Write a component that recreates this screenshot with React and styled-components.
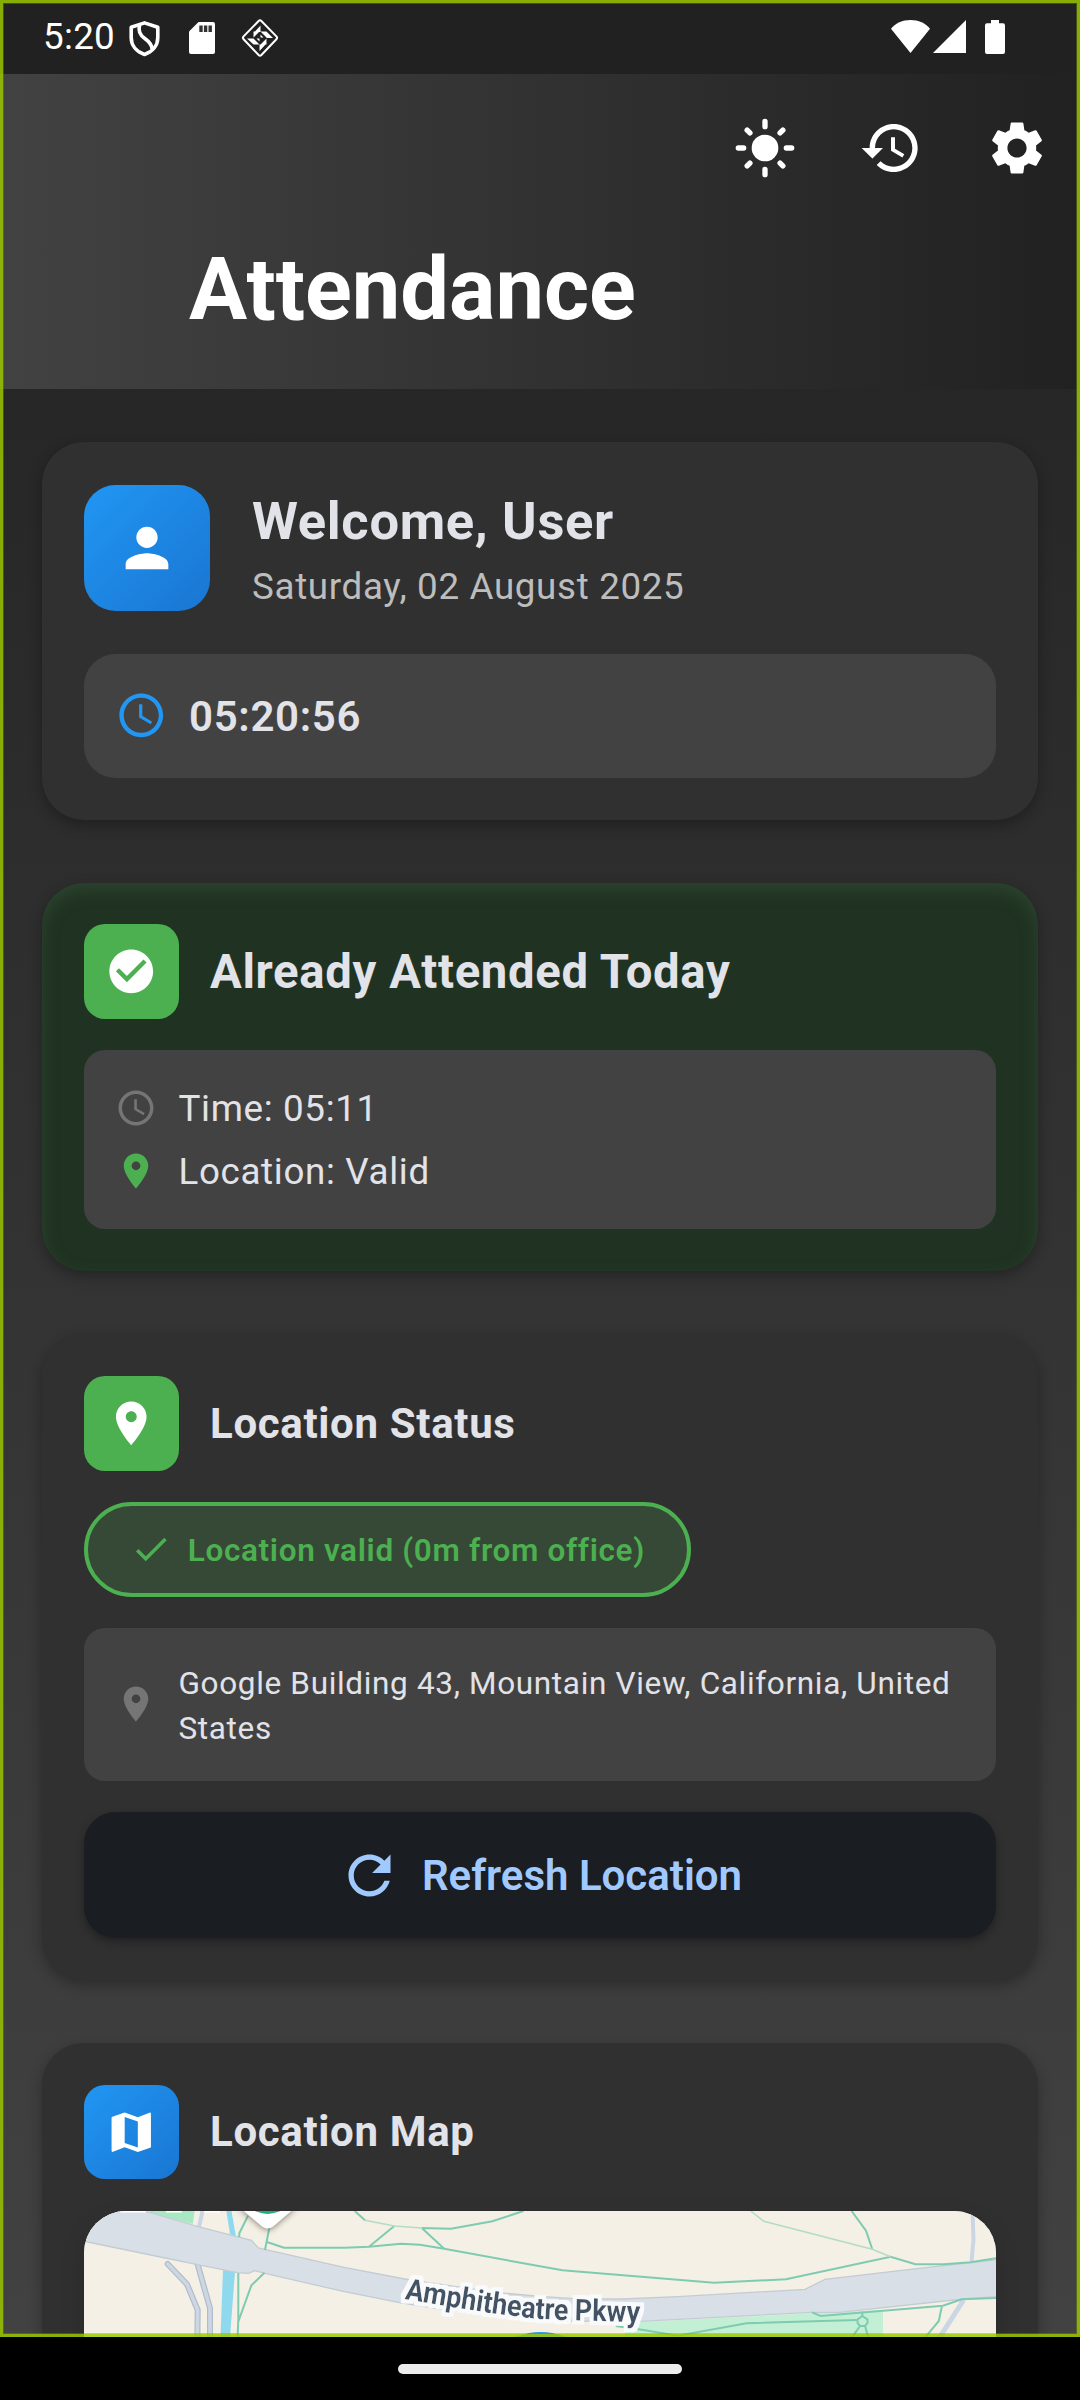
import React from "react";
import styled, { createGlobalStyle, css } from "styled-components";

const GlobalStyle = createGlobalStyle`
  *, *::before, *::after { box-sizing: border-box; }
  html, body { margin: 0; padding: 0; background: #000; }
  body { font-family: Roboto, "Noto Sans", sans-serif; color: #e2e2e9; }
`;

const Phone = styled.div`
  width: 1080px;
  height: 2400px;
  display: flex;
  flex-direction: column;
  overflow: hidden;
  background: #000;
`;

const Screen = styled.div`
  position: relative;
  height: 2337px;
  flex: none;
  display: flex;
  flex-direction: column;
  overflow: hidden;
  background: linear-gradient(180deg, #212121 0%, #424242 100%);
`;

const FocusFrame = styled.div`
  position: absolute;
  inset: 0;
  border: 3px solid rgba(155, 200, 0, 0.84);
  box-shadow: inset 0 0 0 1px rgba(120, 155, 0, 0.4);
  pointer-events: none;
`;

const StatusBar = styled.div`
  height: 74px;
  flex: none;
  display: flex;
  justify-content: space-between;
  padding: 0 75px 0 43px;
  background: #212121;
`;

const StatusGroup = styled.div`
  display: flex;
  align-items: flex-start;
`;

const StatusTime = styled.span`
  font-size: 36.75px;
  line-height: 44px;
  letter-spacing: 0.3px;
  padding-top: 15px;
  width: 83px;
  color: #fff;
`;

const StatusGlyph = styled.svg`
  display: block;
  flex: none;
  margin-left: ${(p) => p.$gap || 0}px;
  margin-top: ${(p) => p.$top}px;
`;

const AppBar = styled.header`
  height: 315px;
  flex: none;
  display: flex;
  flex-direction: column;
  justify-content: space-between;
  background: linear-gradient(90deg, #424242 0%, #212121 100%);
`;

const Actions = styled.div`
  display: flex;
  justify-content: flex-end;
  height: 147px;
`;

const ActionButton = styled.button`
  width: 126px;
  height: 147px;
  display: flex;
  align-items: center;
  justify-content: center;
  border: 0;
  padding: 0;
  background: none;
  color: #fff;
`;

const PageTitle = styled.h1`
  margin: 0;
  padding: 0 0 49px 189px;
  font-size: 86.6px;
  line-height: 100px;
  font-weight: 700;
  color: #fff;
`;

const Content = styled.main`
  display: flex;
  flex-direction: column;
  gap: 63px;
  padding: 53px 42px 0;
`;

const Card = styled.section`
  height: ${(p) => p.$height}px;
  flex: none;
  display: flex;
  flex-direction: column;
  padding: ${(p) => p.$top || 42}px 42px 42px;
  border-radius: 42px;
  background: #303030;
  box-shadow: 0 5px 14px rgba(0, 0, 0, 0.3);
  ${(p) =>
    p.$success &&
    css`
      background: #203322;
      box-shadow: 0 5px 14px rgba(0, 0, 0, 0.3), inset 0 7px 16px rgba(56, 84, 60, 0.5);
    `}
`;

const CardHead = styled.div`
  display: flex;
  align-items: center;
  gap: 31.5px;
  height: 94.5px;
  flex: none;
  margin-bottom: 31.5px;
`;

const Tile = styled.div`
  width: ${(p) => p.$size || 94.5}px;
  height: ${(p) => p.$size || 94.5}px;
  flex: none;
  display: flex;
  align-items: center;
  justify-content: center;
  border-radius: ${(p) => p.$radius || 21}px;
  color: #fff;
  background: ${(p) =>
    p.$tone === "green" ? "#4caf50" : "linear-gradient(135deg, #2196f3 0%, #1976d2 100%)"};
`;

const CardTitle = styled.h2`
  margin: 0;
  padding-top: ${(p) => (p.$large ? 2 : 0)}px;
  font-size: ${(p) => (p.$large ? 47.25 : 42)}px;
  line-height: 63px;
  font-weight: 700;
  letter-spacing: 0.66px;
  color: #e2e2e9;
`;

const Profile = styled.div`
  display: flex;
  align-items: center;
  gap: 42px;
  height: 129px;
  flex: none;
  margin-bottom: 41.5px;
`;

const ProfileText = styled.div`
  display: flex;
  flex-direction: column;
  height: 132px;
  justify-content: space-between;
`;

const Greeting = styled.h2`
  margin: 0;
  font-size: 52.5px;
  line-height: 78px;
  font-weight: 700;
  letter-spacing: 0.66px;
`;

const DateLine = styled.p`
  margin: 0;
  font-size: 36.75px;
  line-height: 52.5px;
  letter-spacing: 0.66px;
  color: #bdbdbd;
`;

const Clock = styled.div`
  height: 124px;
  display: flex;
  align-items: center;
  gap: 21.5px;
  padding: 0 31px;
  border-radius: 31.5px;
  background: #424242;
  color: #e2e2e9;
  font-size: 42px;
  line-height: 60px;
  font-weight: 600;
  letter-spacing: 0.66px;
`;

const DetailBox = styled.div`
  flex: none;
  display: flex;
  flex-direction: column;
  justify-content: center;
  gap: 10.5px;
  height: ${(p) => p.$height}px;
  padding: 0 31px;
  border-radius: 21px;
  background: #424242;
`;

const DetailRow = styled.div`
  display: flex;
  align-items: center;
  gap: 21.5px;
  height: ${(p) => (p.$twoLine ? 90 : 52.5)}px;
`;

const DetailText = styled.span`
  font-size: ${(p) => (p.$small ? 31.5 : 36.75)}px;
  line-height: ${(p) => (p.$small ? 45 : 52.5)}px;
  padding-top: ${(p) => (p.$small ? 4 : 2)}px;
  letter-spacing: 0.66px;
  color: #e2e2e9;
`;

const StatusPill = styled.div`
  align-self: flex-start;
  flex: none;
  display: flex;
  align-items: center;
  gap: 15.75px;
  height: 94.5px;
  padding: 0 42px;
  margin-bottom: 31.5px;
  border: 4px solid #4caf50;
  border-radius: 52.5px;
  background: #364936;
  color: #4caf50;
  font-size: 31.5px;
  line-height: 45px;
  font-weight: 600;
  letter-spacing: 0.66px;
`;

const InlineLabel = styled.span`
  padding-top: ${(p) => p.$drop || 2}px;
`;

const RefreshButton = styled.button`
  height: 126px;
  flex: none;
  margin-top: 31.5px;
  display: flex;
  align-items: center;
  justify-content: center;
  gap: 21px;
  border: 0;
  border-radius: 31.5px;
  background: #1a1d21;
  box-shadow: 0 4px 9px rgba(0, 0, 0, 0.32);
  color: #a0caff;
  font-family: inherit;
  font-size: 42px;
  line-height: 60px;
  font-weight: 600;
`;

const MapFrame = styled.div`
  height: 260px;
  flex: none;
  overflow: hidden;
  border-radius: 42px;
  background: #f4f0e5;
  box-shadow: 0 10px 26px rgba(0, 0, 0, 0.14);
`;

const MapCanvas = styled.svg`
  display: block;
`;

const RoadLabel = styled.text`
  font-family: Roboto, "Noto Sans", sans-serif;
  font-size: 30px;
  font-weight: 700;
  fill: #435266;
`;

const NavBar = styled.div`
  height: 63px;
  display: flex;
  justify-content: center;
  align-items: flex-start;
  padding-top: 27px;
`;

const NavHandle = styled.div`
  width: 284px;
  height: 10px;
  border-radius: 5px;
  background: #ececec;
`;

const Glyph = styled.svg`
  display: block;
  flex: none;
  width: ${(p) => p.$size}px;
  height: ${(p) => p.$size}px;
  fill: ${(p) => p.$color || "currentColor"};
`;

const PATHS = {
  history:
    "M13 3c-4.97 0-9 4.03-9 9H1l3.89 3.89.07.14L9 12H6c0-3.87 3.13-7 7-7s7 3.13 7 7-3.13 7-7 7c-1.93 0-3.68-.79-4.94-2.06l-1.42 1.42C8.27 19.99 10.51 21 13 21c4.97 0 9-4.03 9-9s-4.03-9-9-9zm-1 5v5l4.28 2.54.72-1.21-3.5-2.08V8H12z",
  settings:
    "M19.14 12.94c.04-.3.06-.61.06-.94 0-.32-.02-.64-.07-.94l2.03-1.58c.18-.14.23-.41.12-.61l-1.92-3.32c-.12-.22-.37-.29-.59-.22l-2.39.96c-.5-.38-1.03-.7-1.62-.94l-.36-2.54c-.04-.24-.24-.41-.48-.41h-3.84c-.24 0-.43.17-.47.41l-.36 2.54c-.59.24-1.13.57-1.62.94l-2.39-.96c-.22-.08-.47 0-.59.22L2.74 8.87c-.12.21-.08.47.12.61l2.03 1.58c-.05.3-.09.63-.09.94s.02.64.07.94l-2.03 1.58c-.18.14-.23.41-.12.61l1.92 3.32c.12.22.37.29.59.22l2.39-.96c.5.38 1.03.7 1.62.94l.36 2.54c.05.24.24.41.48.41h3.84c.24 0 .44-.17.47-.41l.36-2.54c.59-.24 1.13-.56 1.62-.94l2.39.96c.22.08.47 0 .59-.22l1.92-3.32c.12-.22.07-.47-.12-.61l-2.01-1.58zM12 15.6c-1.98 0-3.6-1.62-3.6-3.6s1.62-3.6 3.6-3.6 3.6 1.62 3.6 3.6-1.62 3.6-3.6 3.6z",
  person:
    "M12 12c2.21 0 4-1.79 4-4s-1.79-4-4-4-4 1.79-4 4 1.79 4 4 4zm0 2c-2.67 0-8 1.34-8 4v2h16v-2c0-2.66-5.33-4-8-4z",
  clock:
    "M11.99 2C6.47 2 2 6.48 2 12s4.47 10 9.99 10C17.52 22 22 17.52 22 12S17.52 2 11.99 2zM12 20c-4.42 0-8-3.58-8-8s3.58-8 8-8 8 3.58 8 8-3.58 8-8 8zm.5-13H11v6l5.25 3.15.75-1.23-4.5-2.67z",
  checkCircle:
    "M12 2C6.48 2 2 6.48 2 12s4.48 10 10 10 10-4.48 10-10S17.52 2 12 2zm-2 15l-5-5 1.41-1.41L10 14.17l7.59-7.59L19 8l-9 9z",
  pin: "M12 2C8.13 2 5 5.13 5 9c0 5.25 7 13 7 13s7-7.75 7-13c0-3.87-3.13-7-7-7zm0 9.5c-1.38 0-2.5-1.12-2.5-2.5s1.12-2.5 2.5-2.5 2.5 1.12 2.5 2.5-1.12 2.5-2.5 2.5z",
  check: "M9 16.17L4.83 12l-1.42 1.41L9 19 21 7l-1.41-1.41z",
  refresh:
    "M17.65 6.35C16.2 4.9 14.21 4 12 4c-4.42 0-7.99 3.58-7.99 8s3.57 8 7.99 8c3.73 0 6.84-2.55 7.73-6h-2.08c-.82 2.33-3.04 4-5.65 4-3.31 0-6-2.69-6-6s2.69-6 6-6c1.66 0 3.14.69 4.22 1.78L13 11h7V4l-2.35 2.35z",
  map: "M20.5 3l-.16.03L15 5.1 9 3 3.36 4.9c-.21.07-.36.25-.36.48V20.5c0 .28.22.5.5.5l.16-.03L9 18.9l6 2.1 5.64-1.9c.21-.07.36-.25.36-.48V3.5c0-.28-.22-.5-.5-.5zM15 19l-6-2.11V5l6 2.11V19z",
};

function Icon({ name, size, color }) {
  return (
    <Glyph viewBox="0 0 24 24" $size={size} $color={color} aria-hidden="true">
      <path d={PATHS[name]} />
    </Glyph>
  );
}

function SunIcon() {
  return (
    <Glyph viewBox="0 0 24 24" $size={64} aria-hidden="true">
      <circle cx="12" cy="12" r="5" />
      <g stroke="currentColor" strokeWidth="2" strokeLinecap="round">
        <path d="M12 2v2M12 20v2M2 12h2M20 12h2M5.3 5.3l1.05 1.05M17.65 17.65l1.05 1.05M5.3 18.7l1.05-1.05M17.65 6.35l1.05-1.05" />
      </g>
    </Glyph>
  );
}

function StatusIcons() {
  return (
    <>
      <StatusGlyph width="36" height="38" viewBox="0 0 36 38" $top={20}>
        <path
          d="M18.500 2.900 5.200 7.300v10.200c0 8 5.200 14.300 13.300 17 8.100-2.700 13.300-9 13.300-17V7.300z"
          fill="none"
          stroke="#fff"
          strokeWidth="3.600"
          strokeLinejoin="round"
        />
        <path
          d="M13.500 5.500c-1.500 6 .5 9.500 5 12.700s7.500 6 7.500 10.800"
          fill="none"
          stroke="#fff"
          strokeWidth="3.600"
        />
      </StatusGlyph>
      <StatusGlyph width="26" height="32" viewBox="0 0 26 32" $gap={27} $top={22}>
        <path
          d="M9.500 0H24a2 2 0 0 1 2 2v28a2 2 0 0 1-2 2H2a2 2 0 0 1-2-2V9.500z"
          fill="#fff"
        />
        <path d="M10.300 3.500h3.400v6.500h-3.400zM14.900 3.500h3.400v6.500h-3.400zM19.500 3.500h3.400v6.500h-3.400z" fill="#333" />
      </StatusGlyph>
      <StatusGlyph width="38" height="40" viewBox="0 0 38 40" $gap={26} $top={18}>
        <path
          d="M17.600 3 2.600 18.400a2 2 0 0 0 0 2.800l15 15.800a2 2 0 0 0 2.800 0l15-15.800a2 2 0 0 0 0-2.800L20.400 3a2 2 0 0 0-2.800 0z"
          fill="none"
          stroke="#fff"
          strokeWidth="2"
        />
        <path
          d="M19.500 7.500v6.500h-6zM32 20h-6.500v-6.500zM18.500 33v-6.500h6zM6 20.500h6.500v6zM12.500 13.500h6l-6 6zM25.500 13.500v6l-6-6zM25.500 26.500h-6l6-6zM12.500 26.500v-6l6 6zM19.500 16.500l3 3h-3zM18.500 23.500l-3-3h3z"
          fill="#fff"
        />
      </StatusGlyph>
    </>
  );
}

function SignalIcons() {
  return (
    <>
      <StatusGlyph width="39" height="33" viewBox="0 0 39 33" $top={20}>
        <path d="M19.500 33 0 8.800C4.500 3.300 11.500 0 19.500 0S34.500 3.300 39 8.800z" fill="#fff" />
      </StatusGlyph>
      <StatusGlyph width="33" height="33" viewBox="0 0 33 33" $gap={3} $top={20}>
        <path d="M33 0v33H0z" fill="#fff" />
      </StatusGlyph>
      <StatusGlyph width="20" height="34" viewBox="0 0 20 34" $gap={19} $top={20}>
        <path
          d="M6 0h8v3.300h4a2 2 0 0 1 2 2V32a2 2 0 0 1-2 2H2a2 2 0 0 1-2-2V5.300a2 2 0 0 1 2-2h4z"
          fill="#fff"
        />
      </StatusGlyph>
    </>
  );
}

function StreetMap() {
  return (
    <MapCanvas width="912" height="260" viewBox="0 0 912 260">
      <defs>
        <filter id="label-halo" x="-5%" y="-30%" width="110%" height="160%">
          <feMorphology in="SourceAlpha" operator="dilate" radius="3.5" result="grown" />
          <feFlood floodColor="#f8fafc" />
          <feComposite in2="grown" operator="in" result="halo" />
          <feMerge>
            <feMergeNode in="halo" />
            <feMergeNode in="SourceGraphic" />
          </feMerge>
        </filter>
      </defs>
      <rect width="912" height="260" fill="#f4f0e5" />
      <path d="M541 111.700 728 102.300 799 99v60H541z" fill="#c3f0d5" />
      <path d="M65.800 0h44.800l-1.800 13L66 2z" fill="#a9e9c2" />
      <path d="M118.500 0 115 16" stroke="#cbd6e4" strokeWidth="4" fill="none" />
      <path d="M142.300 0h5.200l4.500 26-6-3zM139 59l12 2-5 65-2 40h-9z" fill="#8fd9ee" />
      <g fill="none" strokeLinecap="round" strokeLinejoin="round">
        <g stroke="#b0bcc9" strokeWidth="6">
          <path d="M83.700 53 103 73.300 113.700 99 113 160" />
          <path d="M112.700 50 126 97.300V160" />
        </g>
        <g stroke="#cdd7e3" strokeWidth="3.600">
          <path d="M83.700 53 103 73.300 113.700 99 113 160" />
          <path d="M112.700 50 126 97.300V160" />
        </g>
      </g>
      <path
        d="M-6-16 36-6 67.500 2 114 15.700 167.400 29.300 174.300 37 260 56.300 326 69 370.500 75.500 415 81.700 456 85.300 490 87.700 538.600 88 593.700 85.700 721 78.300 741 68.300 834.800 57.300 920 48V85L879.500 88 755.600 101.300H728L555.900 110.300 456 110 363.700 99 315.500 91.700 260.400 80.700 181 62.300 170.800 59.700 164.600 62.300 153.600 61.700 112.300 53.300 81.300 47-6 29z"
        fill="#d8dfe7"
        stroke="#c3ccd3"
        strokeWidth="1.300"
      />
      <g fill="none" stroke="#cbd6e4" strokeWidth="4">
        <path d="M888.500 0 889.500 29 887.500 50.700" />
        <path d="M879.600 89 845 143" strokeWidth="5" />
      </g>
      <g fill="none" stroke="#7fcbb1" strokeWidth="2">
        <path d="M164 4.700 155.300 22.300V26M185.300 17 181 39" />
        <path d="M182.900 31 200 36.700H260.400L285 35.700 317 32.700 336 33.700 360.200 37.700 456 55.300 478.400 59.300 630 71.700 702 68.300 806.600 45.700 831.400 53.300H860L886.500 51.300 912 47.300" />
        <path d="M270.700 0 281 9.300M337.800 17 367 17.700 408.400 10.300 439.400 0M310.300 15 285 35.700M337.800 17 360.200 37.700" />
        <path d="M767.600 0 782 19.700 788.300 38.300" />
        <path d="M154.300 62V109L153 140M180.500 61.700 167.400 74.300 154.300 110.700" />
        <path d="M531.800 115 559.300 119 593.700 124.700 662.600 112.300 772.800 109" />
        <path d="M728 101.300 736.600 105 858.900 94.700 877.800 88.300 912 87M858 94.700 854.800 110 830 140" />
        <path d="M778.300 100.700V105M778.300 105 773.500 108.500V112L776 115H781L783.500 112V108.500zM776 115 764 132M781 115 786 132" />
      </g>
      <g fill="none" stroke="#b3dcc6" strokeWidth="1.500">
        <path d="M281 9.300 310.300 15 337.800 17M666.700 0 679.800 10.300 788.300 38.300 806.600 45.700" />
      </g>
      <path d="M36 0h26v1.500H36zM82 0h16v1.500H82zM120 0h16v1.500h-16z" fill="#fff" />
      <path
        d="M155-4 178 15.500q5.600 4 11.200 0L212-4z"
        fill="#fff"
        filter="drop-shadow(0 1px 3px rgba(60,50,40,.6))"
      />
      <circle cx="183.600" cy="-25" r="28" fill="#1fae7c" />
      <circle cx="456.700" cy="222" r="100" fill="#6f9f9a" opacity="0.550" />
      <circle cx="456.700" cy="180" r="59" fill="#2d93e6" />
      <path id="road-label" d="M320.500 88C360 95 410 103 442 106.500S500 109 560 111.500" fill="none" />
      <RoadLabel filter="url(#label-halo)">
        <textPath href="#road-label" textLength="237" lengthAdjust="spacingAndGlyphs">
          Amphitheatre Pkwy
        </textPath>
      </RoadLabel>
    </MapCanvas>
  );
}

export default function App() {
  return (
    <>
      <GlobalStyle />
      <Phone>
        <Screen>
          <StatusBar>
            <StatusGroup>
              <StatusTime>5:20</StatusTime>
              <StatusIcons />
            </StatusGroup>
            <StatusGroup>
              <SignalIcons />
            </StatusGroup>
          </StatusBar>
          <AppBar>
            <Actions>
              <ActionButton aria-label="Light mode">
                <SunIcon />
              </ActionButton>
              <ActionButton aria-label="History">
                <Icon name="history" size={64} />
              </ActionButton>
              <ActionButton aria-label="Settings">
                <Icon name="settings" size={64} />
              </ActionButton>
            </Actions>
            <PageTitle>Attendance</PageTitle>
          </AppBar>
          <Content>
            <Card $height={378} $top={41}>
              <Profile>
                <Tile $size={126} $radius={31.5}>
                  <Icon name="person" size={64} />
                </Tile>
                <ProfileText>
                  <Greeting>Welcome, User</Greeting>
                  <DateLine>Saturday, 02 August 2025</DateLine>
                </ProfileText>
              </Profile>
              <Clock>
                <Icon name="clock" size={52.5} color="#2196f3" />
                <InlineLabel>05:20:56</InlineLabel>
              </Clock>
            </Card>

            <Card $height={388} $top={41} $success>
              <CardHead>
                <Tile $tone="green">
                  <Icon name="checkCircle" size={52.5} />
                </Tile>
                <CardTitle $large>Already Attended Today</CardTitle>
              </CardHead>
              <DetailBox $height={178.5}>
                <DetailRow>
                  <Icon name="clock" size={42} color="#757575" />
                  <DetailText>Time: 05:11</DetailText>
                </DetailRow>
                <DetailRow>
                  <Icon name="pin" size={42} color="#4caf50" />
                  <DetailText>Location: Valid</DetailText>
                </DetailRow>
              </DetailBox>
            </Card>

            <Card $height={645.5}>
              <CardHead>
                <Tile $tone="green">
                  <Icon name="pin" size={52.5} />
                </Tile>
                <CardTitle>Location Status</CardTitle>
              </CardHead>
              <StatusPill>
                <Icon name="check" size={42} />
                <InlineLabel $drop={3}>Location valid (0m from office)</InlineLabel>
              </StatusPill>
              <DetailBox $height={152.5}>
                <DetailRow $twoLine>
                  <Icon name="pin" size={42} color="#757575" />
                  <DetailText $small>
                    Google Building 43, Mountain View, California, United States
                  </DetailText>
                </DetailRow>
              </DetailBox>
              <RefreshButton>
                <Icon name="refresh" size={63} />
                <InlineLabel>Refresh Location</InlineLabel>
              </RefreshButton>
            </Card>

            <Card $height={470}>
              <CardHead>
                <Tile>
                  <Icon name="map" size={52.5} />
                </Tile>
                <CardTitle>Location Map</CardTitle>
              </CardHead>
              <MapFrame>
                <StreetMap />
              </MapFrame>
            </Card>
          </Content>
          <FocusFrame />
        </Screen>
        <NavBar>
          <NavHandle />
        </NavBar>
      </Phone>
    </>
  );
}
